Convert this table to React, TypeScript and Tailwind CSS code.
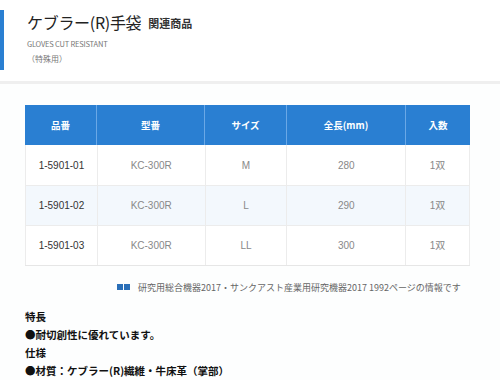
import React from "react";

const rows = [
  ["1-5901-01", "KC-300R", "M", "280", "1双"],
  ["1-5901-02", "KC-300R", "L", "290", "1双"],
  ["1-5901-03", "KC-300R", "LL", "300", "1双"],
];
const heads = ["品番", "型番", "サイズ", "全長(mm)", "入数"];
const widths = ["w-[72px]", "w-[108px]", "w-[82px]", "w-[119px]", "w-[64px]"];

export default function App() {
  return (
    <div
      className="w-[500px] h-[391px] bg-white overflow-hidden"
      style={{ fontFamily: '"Noto Sans CJK JP", "Noto Sans", sans-serif' }}
    >
      <div className="h-[81px] pt-[10px] flex">
        <div className="w-[4px] h-[60px] bg-[#2a7fd2]" />
        <div className="pl-[23px] pt-[4px]">
          <div className="flex items-end gap-[7px] leading-none">
            <span className="text-[16px] text-[#222] tracking-[-0.3px]">ケブラー(R)手袋</span>
            <span className="text-[11px] font-bold text-[#333] pb-[1px]">関連商品</span>
          </div>
          <div className="text-[7.5px] text-[#777] mt-[10px] leading-none tracking-[-0.2px]">
            GLOVES CUT RESISTANT
          </div>
          <div className="text-[8px] text-[#777] mt-[7px] leading-none">（特殊用）</div>
        </div>
      </div>
      <div className="h-[3px] bg-[#efefef]" />
      <div className="bg-[#fdfefe] pt-[21px] pl-[25px]">
        <div className="w-[445px] border-b border-[#e6e6e6]">
          <div className="flex bg-[#2a7fd2] h-[40px]">
            {heads.map((h, i) => (
              <div
                key={h}
                className={`${widths[i]} flex items-center justify-center text-[9.5px] font-bold text-white ${i < 4 ? "border-r border-[#6aa8e6]" : ""}`}
              >
                {h}
              </div>
            ))}
          </div>
          {rows.map((r, ri) => (
            <div
              key={ri}
              className={`flex h-[40px] ${ri === 1 ? "bg-[#f3f8fd]" : "bg-white"} ${ri > 0 ? "border-t border-[#e9edf0]" : ""} border-l border-[#ececec]`}
            >
              {r.map((c, i) => (
                <div
                  key={i}
                  className={`${widths[i]} flex items-center justify-center text-[10px] ${i === 0 ? "text-[#333]" : "text-[#888]"} border-r border-[#ececec]`}
                  style={{ fontFamily: '"Liberation Sans", "Noto Sans CJK JP", sans-serif' }}
                >
                  {c}
                </div>
              ))}
            </div>
          ))}
        </div>
        <div className="flex items-center mt-[16px] pl-[92px] h-[10px]">
          <div className="flex gap-[1px]">
            <div className="w-[6px] h-[6px] bg-[#2a6fb8]" />
            <div className="w-[6px] h-[6px] bg-[#2a6fb8]" />
          </div>
          <span className="ml-[8px] text-[9px] text-[#666] leading-none whitespace-nowrap">
            研究用総合機器2017・サンクアスト産業用研究機器2017 1992ページの情報です
          </span>
        </div>
        <div className="mt-[16px] text-[10.5px] font-bold text-[#111] leading-[18px]">
          <div>特長</div>
          <div>●耐切創性に優れています。</div>
          <div>仕様</div>
          <div>●材質：ケブラー(R)繊維・牛床革（掌部）</div>
        </div>
      </div>
    </div>
  );
}
